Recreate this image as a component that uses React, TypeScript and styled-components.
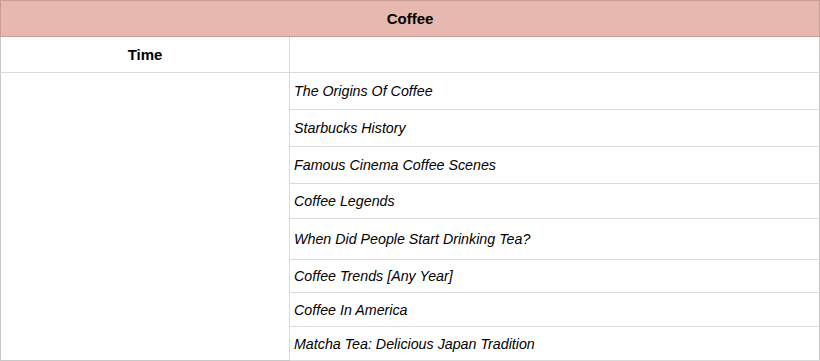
import React from 'react';
import styled, { createGlobalStyle } from 'styled-components';

const HeaderFill = '#e6b8af';
const HeaderLine = '#c99c94';
const GridLine = '#dadada';
const OuterLine = '#c8c8c8';

const GlobalStyle = createGlobalStyle`
  html, body {
    margin: 0;
    padding: 0;
    background: #fff;
  }
  body {
    font-family: 'Liberation Sans', Arial, sans-serif;
    color: #000;
  }
`;

const Sheet = styled.table`
  width: 820px;
  border-collapse: collapse;
  table-layout: fixed;
  font-family: 'Liberation Sans', Arial, sans-serif;
`;

const TitleCell = styled.th`
  height: 35px;
  padding: 0;
  background-color: ${HeaderFill};
  border: 1px solid ${HeaderLine};
  font-size: 15px;
  font-weight: 700;
  text-align: center;
  vertical-align: middle;
`;

const LabelCell = styled.th`
  height: 35px;
  padding: 0;
  border: 1px solid ${GridLine};
  border-left-color: ${OuterLine};
  font-size: 15px;
  font-weight: 700;
  text-align: center;
  vertical-align: middle;
`;

const BlankCell = styled.td`
  padding: 0;
  border: 1px solid ${GridLine};
  border-right-color: ${OuterLine};
`;

const TimeCell = styled.td`
  padding: 0;
  border: 1px solid ${GridLine};
  border-left-color: ${OuterLine};
  border-bottom-color: ${OuterLine};
`;

const TopicCell = styled.td<{ $h: number }>`
  height: ${(p) => p.$h - 1}px;
  padding: 0 4px 0 4px;
  border: 1px solid ${GridLine};
  border-right-color: ${OuterLine};
  font-size: 14.25px;
  font-style: italic;
  text-align: left;
  vertical-align: middle;
  white-space: nowrap;
`;

const topics: [string, number][] = [
  ['The Origins Of Coffee', 37],
  ['Starbucks History', 37],
  ['Famous Cinema Coffee Scenes', 37],
  ['Coffee Legends', 35],
  ['When Did People Start Drinking Tea?', 41],
  ['Coffee Trends [Any Year]', 33],
  ['Coffee In America', 34],
  ['Matcha Tea: Delicious Japan Tradition', 34],
];

export default function App() {
  return (
    <>
      <GlobalStyle />
      <Sheet>
        <colgroup>
          <col style={{ width: 289 }} />
          <col />
        </colgroup>
        <thead>
          <tr>
            <TitleCell colSpan={2}>Coffee</TitleCell>
          </tr>
          <tr>
            <LabelCell>Time</LabelCell>
            <BlankCell />
          </tr>
        </thead>
        <tbody>
          {topics.map(([title, h], i) => (
            <tr key={title}>
              {i === 0 && <TimeCell rowSpan={topics.length} />}
              <TopicCell $h={h}>{title}</TopicCell>
            </tr>
          ))}
        </tbody>
      </Sheet>
    </>
  );
}
